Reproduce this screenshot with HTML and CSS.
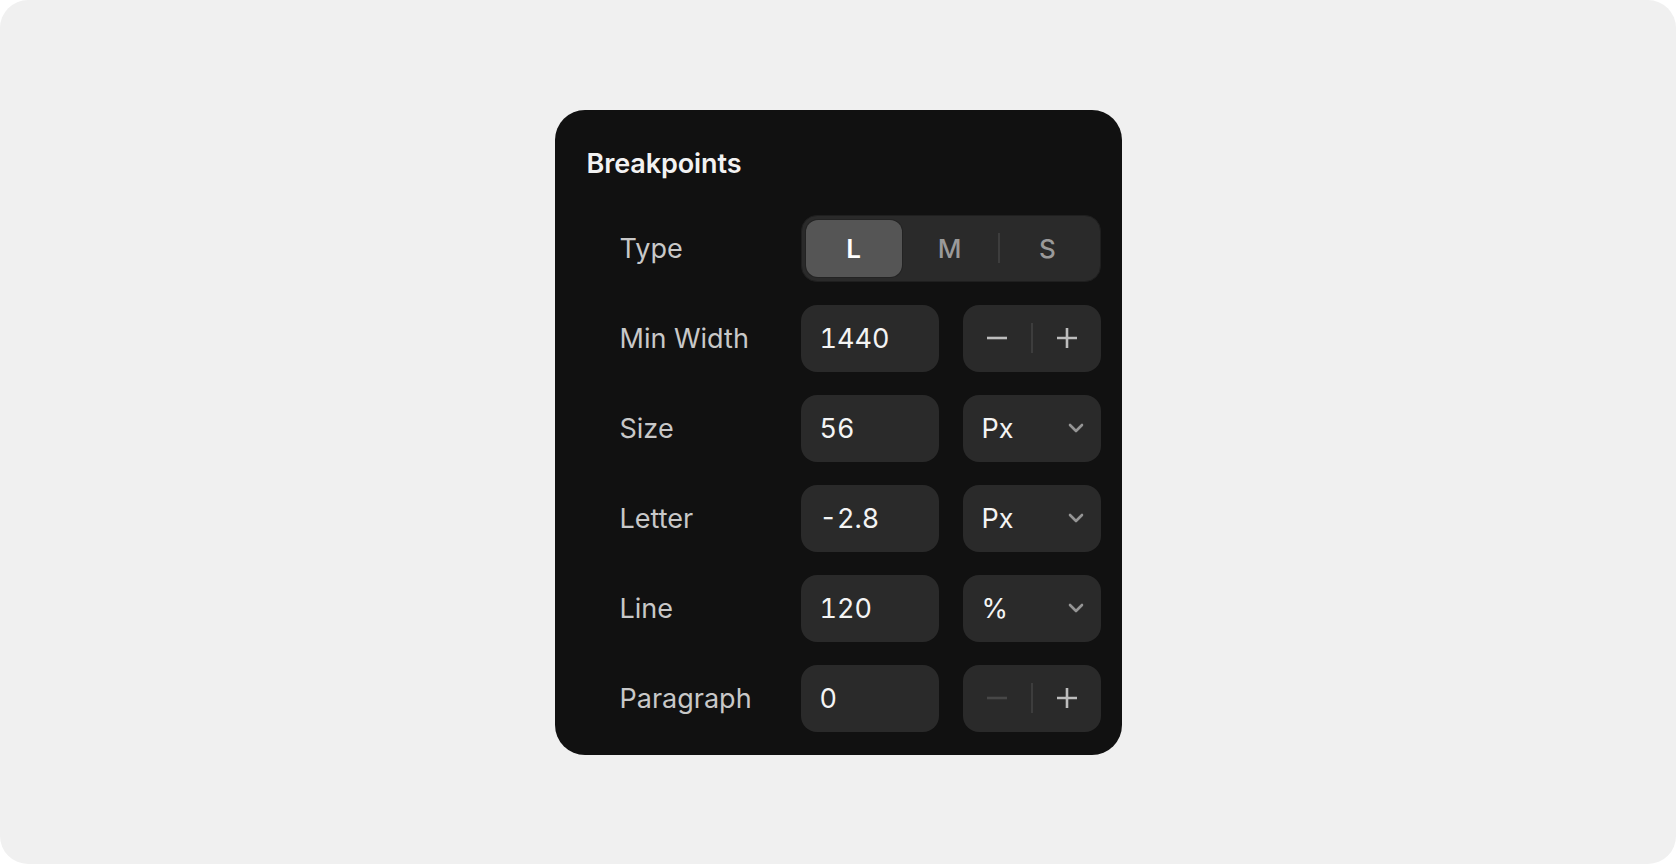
FILE: index.html
```html
<!DOCTYPE html>
<html lang="en">
<head>
<meta charset="utf-8">
<title>Breakpoints</title>
<link rel="stylesheet" href="styles.css">
</head>
<body>
<div class="frame">
  <section class="card">
    <h2 class="title">Breakpoints</h2>
    <div class="rows">
      <div class="row">
        <span class="label">Type</span>
        <div class="segmented">
          <button class="seg active">L</button>
          <button class="seg">M</button>
          <span class="seg-div"></span>
          <button class="seg">S</button>
        </div>
      </div>
      <div class="row">
        <span class="label">Min Width</span>
        <div class="field">1440</div>
        <div class="stepper">
          <span class="step"><svg class="ico" viewBox="0 0 24 24"><path d="M2 12h20"/></svg></span>
          <span class="step-div"></span>
          <span class="step"><svg class="ico" viewBox="0 0 24 24"><path d="M2 12h20M12 2v20"/></svg></span>
        </div>
      </div>
      <div class="row">
        <span class="label">Size</span>
        <div class="field">56</div>
        <div class="select"><span>Px</span><svg class="chev" viewBox="0 0 16 10"><path d="M2 2l6 6 6-6"/></svg></div>
      </div>
      <div class="row">
        <span class="label">Letter</span>
        <div class="field">-2.8</div>
        <div class="select"><span>Px</span><svg class="chev" viewBox="0 0 16 10"><path d="M2 2l6 6 6-6"/></svg></div>
      </div>
      <div class="row">
        <span class="label">Line</span>
        <div class="field">120</div>
        <div class="select"><span>%</span><svg class="chev" viewBox="0 0 16 10"><path d="M2 2l6 6 6-6"/></svg></div>
      </div>
      <div class="row">
        <span class="label">Paragraph</span>
        <div class="field">0</div>
        <div class="stepper">
          <span class="step disabled"><svg class="ico" viewBox="0 0 24 24"><path d="M2 12h20"/></svg></span>
          <span class="step-div"></span>
          <span class="step"><svg class="ico" viewBox="0 0 24 24"><path d="M2 12h20M12 2v20"/></svg></span>
        </div>
      </div>
    </div>
  </section>
</div>
</body>
</html>
```

FILE: styles.css
```css
* { box-sizing: border-box; }
html, body {
  margin: 0;
  padding: 0;
  background: #ffffff;
}
body {
  font-family: Inter, "Noto Sans", sans-serif;
}
.frame {
  width: 1676px;
  height: 864px;
  background: #f0f0f0;
  border-radius: 28px;
  display: flex;
  align-items: center;
  justify-content: center;
}
.card {
  width: 567px;
  background: #111111;
  border-radius: 30px;
  padding: 38px 21px 23px 32px;
}
.title {
  margin: 0;
  font-size: 27px;
  line-height: 32px;
  font-weight: 600;
  color: #f2f2f2;
  letter-spacing: -0.1px;
}
.rows {
  margin-top: 35px;
  display: flex;
  flex-direction: column;
  gap: 23px;
}
.row {
  display: flex;
  align-items: center;
  height: 67px;
}
.label {
  width: 214px;
  padding-left: 33px;
  font-size: 27px;
  color: #c8c8c8;
  font-weight: 400;
}
.segmented {
  width: 300px;
  height: 67px;
  background: #2a2a2a;
  border: 1px solid #1f1f1f;
  border-radius: 16px;
  padding: 4px;
  display: flex;
  align-items: center;
}
.seg {
  flex: 1;
  height: 100%;
  border: 0;
  background: transparent;
  font-family: inherit;
  font-size: 26px;
  font-weight: 500;
  color: #9a9a9a;
  border-radius: 12px;
  padding: 0;
}
.seg.active {
  background: #555555;
  color: #ffffff;
  font-weight: 600;
  box-shadow: 0 0 0 1px #232323;
}
.seg-div {
  width: 2px;
  height: 30px;
  background: #3d3d3d;
}
.field {
  width: 138px;
  height: 67px;
  background: #2a2a2a;
  border-radius: 16px;
  padding-left: 19px;
  display: flex;
  align-items: center;
  font-size: 27px;
  color: #f4f4f4;
  font-variant-numeric: tabular-nums;
}
.stepper, .select {
  width: 138px;
  height: 67px;
  margin-left: 24px;
  background: #2a2a2a;
  border-radius: 16px;
  display: flex;
  align-items: center;
}
.step {
  flex: 1;
  display: flex;
  align-items: center;
  justify-content: center;
  color: #bdbdbd;
}
.step.disabled { color: #474747; }
.step-div {
  width: 2px;
  height: 30px;
  background: #3d3d3d;
}
.ico {
  width: 24px;
  height: 24px;
  fill: none;
  stroke: currentColor;
  stroke-width: 2.6;
  stroke-linecap: butt;
}
.select {
  justify-content: space-between;
  padding: 0 17px 0 19px;
  font-size: 27px;
  color: #f4f4f4;
}
.chev {
  width: 16px;
  height: 10px;
  fill: none;
  stroke: #959595;
  stroke-width: 2.6;
  stroke-linecap: round;
  stroke-linejoin: round;
}
```
